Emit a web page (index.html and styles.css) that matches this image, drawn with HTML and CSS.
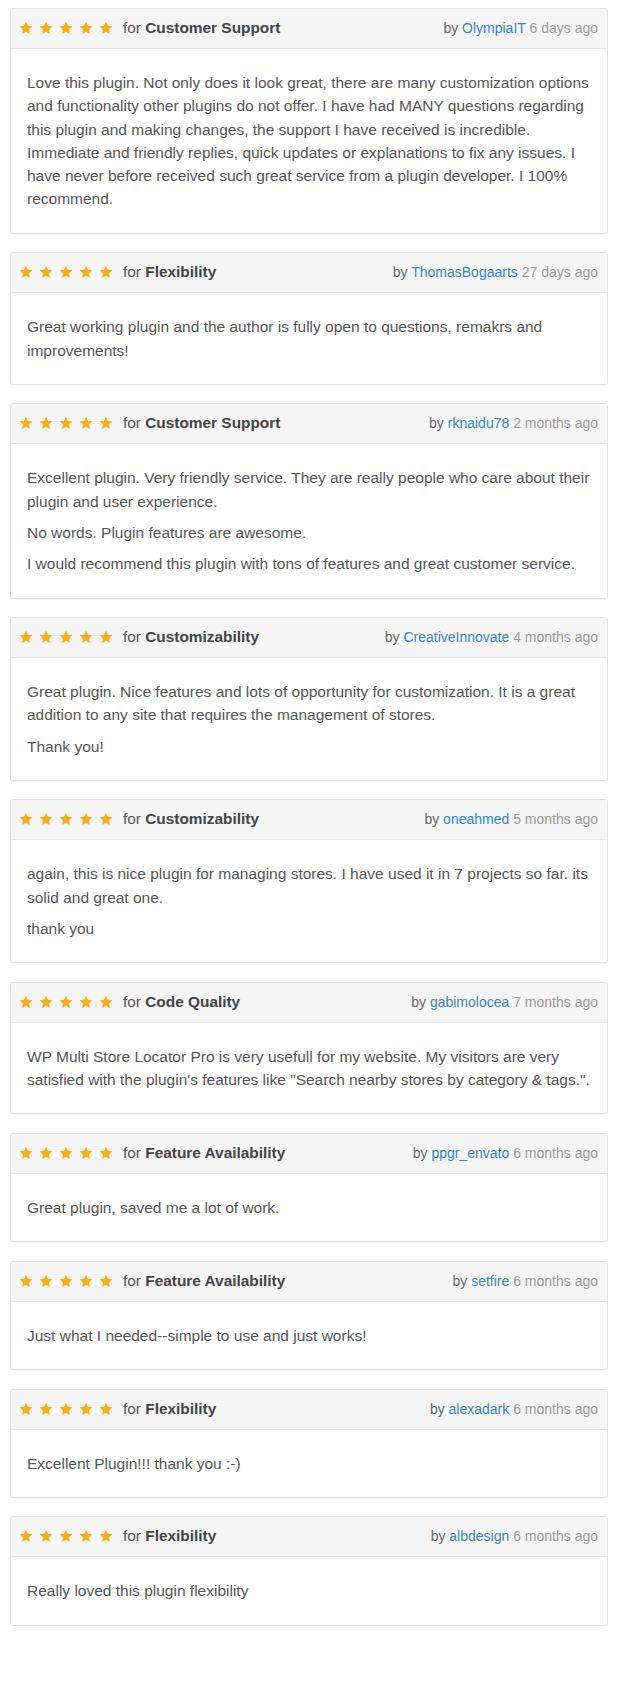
FILE: index.html
```html
<!DOCTYPE html>
<html lang="en">
<head>
<meta charset="utf-8">
<title>Reviews</title>
<link rel="stylesheet" href="styles.css">
</head>
<body>
<svg width="0" height="0" class="defs" aria-hidden="true">
  <defs>
    <symbol id="star" viewBox="0 0 24 24">
      <path d="M12 1.2l3.3 7 7.6 1-5.6 5.3 1.4 7.6L12 18.4l-6.7 3.7 1.4-7.6L1.1 9.2l7.6-1z"/>
    </symbol>
  </defs>
</svg>

<div class="reviews">

  <div class="review">
    <div class="review-head">
      <div class="rating">
        <span class="stars"><svg><use href="#star"/></svg><svg><use href="#star"/></svg><svg><use href="#star"/></svg><svg><use href="#star"/></svg><svg><use href="#star"/></svg></span>
        <span class="for">for <strong>Customer Support</strong></span>
      </div>
      <div class="meta">by <a href="#">OlympiaIT</a> <span class="time">6 days ago</span></div>
    </div>
    <div class="review-body">
      <p>Love this plugin. Not only does it look great, there are many customization options and functionality other plugins do not offer. I have had MANY questions regarding this plugin and making changes, the support I have received is incredible. Immediate and friendly replies, quick updates or explanations to fix any issues. I have never before received such great service from a plugin developer. I 100% recommend.</p>
    </div>
  </div>

  <div class="review">
    <div class="review-head">
      <div class="rating">
        <span class="stars"><svg><use href="#star"/></svg><svg><use href="#star"/></svg><svg><use href="#star"/></svg><svg><use href="#star"/></svg><svg><use href="#star"/></svg></span>
        <span class="for">for <strong>Flexibility</strong></span>
      </div>
      <div class="meta">by <a href="#">ThomasBogaarts</a> <span class="time">27 days ago</span></div>
    </div>
    <div class="review-body">
      <p>Great working plugin and the author is fully open to questions, remakrs and improvements!</p>
    </div>
  </div>

  <div class="review">
    <div class="review-head">
      <div class="rating">
        <span class="stars"><svg><use href="#star"/></svg><svg><use href="#star"/></svg><svg><use href="#star"/></svg><svg><use href="#star"/></svg><svg><use href="#star"/></svg></span>
        <span class="for">for <strong>Customer Support</strong></span>
      </div>
      <div class="meta">by <a href="#">rknaidu78</a> <span class="time">2 months ago</span></div>
    </div>
    <div class="review-body">
      <p>Excellent plugin. Very friendly service. They are really people who care about their plugin and user experience.</p>
      <p>No words. Plugin features are awesome.</p>
      <p>I would recommend this plugin with tons of features and great customer service.</p>
    </div>
  </div>

  <div class="review">
    <div class="review-head">
      <div class="rating">
        <span class="stars"><svg><use href="#star"/></svg><svg><use href="#star"/></svg><svg><use href="#star"/></svg><svg><use href="#star"/></svg><svg><use href="#star"/></svg></span>
        <span class="for">for <strong>Customizability</strong></span>
      </div>
      <div class="meta">by <a href="#">CreativeInnovate</a> <span class="time">4 months ago</span></div>
    </div>
    <div class="review-body">
      <p>Great plugin. Nice features and lots of opportunity for customization. It is a great addition to any site that requires the management of stores.</p>
      <p>Thank you!</p>
    </div>
  </div>

  <div class="review">
    <div class="review-head">
      <div class="rating">
        <span class="stars"><svg><use href="#star"/></svg><svg><use href="#star"/></svg><svg><use href="#star"/></svg><svg><use href="#star"/></svg><svg><use href="#star"/></svg></span>
        <span class="for">for <strong>Customizability</strong></span>
      </div>
      <div class="meta">by <a href="#">oneahmed</a> <span class="time">5 months ago</span></div>
    </div>
    <div class="review-body">
      <p>again, this is nice plugin for managing stores. I have used it in 7 projects so far. its solid and great one.</p>
      <p>thank you</p>
    </div>
  </div>

  <div class="review">
    <div class="review-head">
      <div class="rating">
        <span class="stars"><svg><use href="#star"/></svg><svg><use href="#star"/></svg><svg><use href="#star"/></svg><svg><use href="#star"/></svg><svg><use href="#star"/></svg></span>
        <span class="for">for <strong>Code Quality</strong></span>
      </div>
      <div class="meta">by <a href="#">gabimolocea</a> <span class="time">7 months ago</span></div>
    </div>
    <div class="review-body">
      <p>WP Multi Store Locator Pro is very usefull for my website. My visitors are very satisfied with the plugin's features like "Search nearby stores by category &amp; tags.".</p>
    </div>
  </div>

  <div class="review">
    <div class="review-head">
      <div class="rating">
        <span class="stars"><svg><use href="#star"/></svg><svg><use href="#star"/></svg><svg><use href="#star"/></svg><svg><use href="#star"/></svg><svg><use href="#star"/></svg></span>
        <span class="for">for <strong>Feature Availability</strong></span>
      </div>
      <div class="meta">by <a href="#">ppgr_envato</a> <span class="time">6 months ago</span></div>
    </div>
    <div class="review-body">
      <p>Great plugin, saved me a lot of work.</p>
    </div>
  </div>

  <div class="review">
    <div class="review-head">
      <div class="rating">
        <span class="stars"><svg><use href="#star"/></svg><svg><use href="#star"/></svg><svg><use href="#star"/></svg><svg><use href="#star"/></svg><svg><use href="#star"/></svg></span>
        <span class="for">for <strong>Feature Availability</strong></span>
      </div>
      <div class="meta">by <a href="#">setfire</a> <span class="time">6 months ago</span></div>
    </div>
    <div class="review-body">
      <p>Just what I needed--simple to use and just works!</p>
    </div>
  </div>

  <div class="review">
    <div class="review-head">
      <div class="rating">
        <span class="stars"><svg><use href="#star"/></svg><svg><use href="#star"/></svg><svg><use href="#star"/></svg><svg><use href="#star"/></svg><svg><use href="#star"/></svg></span>
        <span class="for">for <strong>Flexibility</strong></span>
      </div>
      <div class="meta">by <a href="#">alexadark</a> <span class="time">6 months ago</span></div>
    </div>
    <div class="review-body">
      <p>Excellent Plugin!!! thank you :-)</p>
    </div>
  </div>

  <div class="review">
    <div class="review-head">
      <div class="rating">
        <span class="stars"><svg><use href="#star"/></svg><svg><use href="#star"/></svg><svg><use href="#star"/></svg><svg><use href="#star"/></svg><svg><use href="#star"/></svg></span>
        <span class="for">for <strong>Flexibility</strong></span>
      </div>
      <div class="meta">by <a href="#">albdesign</a> <span class="time">6 months ago</span></div>
    </div>
    <div class="review-body">
      <p>Really loved this plugin flexibility</p>
    </div>
  </div>

</div>
</body>
</html>
```

FILE: styles.css
```css
html, body {
  background: #ffffff;
}
body {
  margin: 8px 14px 8px 10px;
  font-family: "Liberation Sans", Arial, sans-serif;
  color: #555555;
}
.defs {
  position: absolute;
  width: 0;
  height: 0;
  overflow: hidden;
}
.reviews {
  display: flex;
  flex-direction: column;
  gap: 18.5px;
}
.review {
  border: 1px solid #e3e3e3;
  border-radius: 3px;
  background: #ffffff;
  box-shadow: 0 1px 1px rgba(0, 0, 0, 0.04);
}
.review-head {
  display: flex;
  justify-content: space-between;
  align-items: center;
  padding: 9px 9px 10px 8px;
  height: 20px;
  background: #f5f5f5;
  border-bottom: 1px solid #e6e6e6;
  border-radius: 3px 3px 0 0;
}
.rating {
  display: flex;
  align-items: center;
}
.stars {
  display: flex;
  align-items: center;
  gap: 6px;
  margin-right: 10px;
}
.stars svg {
  width: 14px;
  height: 14px;
  fill: #f6ad1e;
  display: block;
}
.for {
  font-size: 15.4px;
  line-height: 20px;
  color: #555555;
}
.for strong {
  color: #444444;
  font-weight: bold;
}
.meta {
  font-size: 14px;
  line-height: 20px;
  color: #666666;
  white-space: nowrap;
}
.meta a {
  color: #3a86c1;
  text-decoration: none;
}
.meta .time {
  color: #999999;
}
.review-body {
  padding: 15px 6px 15px 16px;
}
.review-body p {
  margin: 7px 0;
  font-size: 15.5px;
  line-height: 23.3px;
  color: #555555;
}
.review-body p + p {
  margin-top: 8px;
}
```
